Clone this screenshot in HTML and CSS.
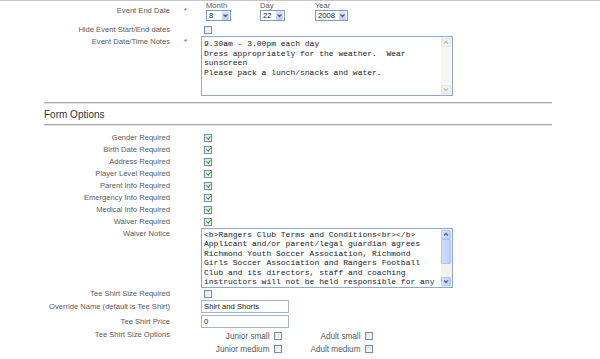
FILE: index.html
```html
<!DOCTYPE html>
<html lang="en">
<head>
    <meta charset="UTF-8">
    <meta name="viewport" content="width=device-width, initial-scale=1.0">
    <title>Event Form Options</title>
    <link rel="stylesheet" href="styles.css">
</head>
<body>

<div class="topline"></div>

<!-- Ngày kết thúc -->
<div class="row row-date">
    <div class="lbl">Event End Date</div>
    <div class="req">*</div>
    <div class="fld date-pick">
        <div class="date-part">
            <div class="sublbl">Month</div>
            <div class="sel sel-month">
                <span class="sel-val">8</span>
                <span class="sel-btn"><svg width="7" height="9" viewBox="0 0 7 9"><polyline points="1.5,3.5 3.5,5.5 5.5,3.5" fill="none" stroke="#4d6185" stroke-width="1.4"/></svg></span>
            </div>
        </div>
        <div class="date-part">
            <div class="sublbl">Day</div>
            <div class="sel sel-day">
                <span class="sel-val">22</span>
                <span class="sel-btn"><svg width="7" height="9" viewBox="0 0 7 9"><polyline points="1.5,3.5 3.5,5.5 5.5,3.5" fill="none" stroke="#4d6185" stroke-width="1.4"/></svg></span>
            </div>
        </div>
        <div class="date-part">
            <div class="sublbl">Year</div>
            <div class="sel sel-year">
                <span class="sel-val">2008</span>
                <span class="sel-btn"><svg width="7" height="9" viewBox="0 0 7 9"><polyline points="1.5,3.5 3.5,5.5 5.5,3.5" fill="none" stroke="#4d6185" stroke-width="1.4"/></svg></span>
            </div>
        </div>
    </div>
</div>

<div class="row row-chk">
    <div class="lbl">Hide Event Start/End dates</div>
    <div class="req"></div>
    <div class="fld"><span class="chk"></span></div>
</div>

<div class="row">
    <div class="lbl">Event Date/Time Notes</div>
    <div class="req">*</div>
    <div class="fld">
        <div class="tarea tarea-notes">
            <div class="tarea-text">9.30am - 3.00pm each day
Dress appropriately for the weather.  Wear
sunscreen
Please pack a lunch/snacks and water.</div>
            <div class="sbar">
                <span class="sbtn"><svg width="8" height="7" viewBox="0 0 8 7"><polyline points="2,4.5 4,2.5 6,4.5" fill="none" stroke="#b8b8b4" stroke-width="1.2"/></svg></span>
                <span class="strack"></span>
                <span class="sbtn"><svg width="8" height="7" viewBox="0 0 8 7"><polyline points="2,2.5 4,4.5 6,2.5" fill="none" stroke="#b8b8b4" stroke-width="1.2"/></svg></span>
            </div>
        </div>
    </div>
</div>

<!-- Tùy chọn form -->
<div class="sect">
    <div class="rule"></div>
    <div class="sect-title">Form Options</div>
    <div class="rule rule-low"></div>
</div>

<div class="chk-list">
    <div class="row row-chk">
        <div class="lbl">Gender Required</div>
        <div class="req"></div>
        <div class="fld"><span class="chk on"></span></div>
    </div>
    <div class="row row-chk">
        <div class="lbl">Birth Date Required</div>
        <div class="req"></div>
        <div class="fld"><span class="chk on"></span></div>
    </div>
    <div class="row row-chk">
        <div class="lbl">Address Required</div>
        <div class="req"></div>
        <div class="fld"><span class="chk on"></span></div>
    </div>
    <div class="row row-chk">
        <div class="lbl">Player Level Required</div>
        <div class="req"></div>
        <div class="fld"><span class="chk on"></span></div>
    </div>
    <div class="row row-chk">
        <div class="lbl">Parent Info Required</div>
        <div class="req"></div>
        <div class="fld"><span class="chk on"></span></div>
    </div>
    <div class="row row-chk">
        <div class="lbl">Emergency Info Required</div>
        <div class="req"></div>
        <div class="fld"><span class="chk on"></span></div>
    </div>
    <div class="row row-chk">
        <div class="lbl">Medical Info Required</div>
        <div class="req"></div>
        <div class="fld"><span class="chk on"></span></div>
    </div>
    <div class="row row-chk">
        <div class="lbl">Waiver Required</div>
        <div class="req"></div>
        <div class="fld"><span class="chk on"></span></div>
    </div>
</div>

<div class="row">
    <div class="lbl">Waiver Notice</div>
    <div class="req"></div>
    <div class="fld">
        <div class="tarea tarea-waiver">
            <div class="tarea-text">&lt;b&gt;Rangers Club Terms and Conditions&lt;br&gt;&lt;/b&gt;
Applicant and/or parent/legal guardian agrees
Richmond Youth Soccer Association, Richmond
Girls Soccer Association and Rangers Football
Club and its directors, staff and coaching
instructors will not be held responsible for any</div>
            <div class="sbar sbar-on">
                <span class="sbtn"><svg width="8" height="7" viewBox="0 0 8 7"><polyline points="2,4.5 4,2.5 6,4.5" fill="none" stroke="#4d6185" stroke-width="1.3"/></svg></span>
                <span class="sthumb"></span>
                <span class="strack"></span>
                <span class="sbtn"><svg width="8" height="7" viewBox="0 0 8 7"><polyline points="2,2.5 4,4.5 6,2.5" fill="none" stroke="#4d6185" stroke-width="1.3"/></svg></span>
            </div>
        </div>
    </div>
</div>

<div class="row row-chk">
    <div class="lbl">Tee Shirt Size Required</div>
    <div class="req"></div>
    <div class="fld"><span class="chk"></span></div>
</div>

<div class="row row-inp">
    <div class="lbl">Override Name (default is Tee Shirt)</div>
    <div class="req"></div>
    <div class="fld"><div class="inp">Shirt and Shorts</div></div>
</div>

<div class="row row-inp row-price">
    <div class="lbl">Tee Shirt Price</div>
    <div class="req"></div>
    <div class="fld"><div class="inp">0</div></div>
</div>

<div class="row">
    <div class="lbl">Tee Shirt Size Options</div>
    <div class="req"></div>
    <div class="fld">
        <div class="size-grid">
            <div class="size-cell">Junior small <span class="chk"></span></div>
            <div class="size-cell">Adult small <span class="chk"></span></div>
            <div class="size-cell">Junior medium <span class="chk"></span></div>
            <div class="size-cell">Adult medium <span class="chk"></span></div>
        </div>
    </div>
</div>

</body>
</html>
```

FILE: styles.css
```css
/* Style chung */
body {
    margin: 0;
    background-color: #fff;
    font-family: "Liberation Sans", Arial, sans-serif;
    font-size: 7.6px;
    color: #5a5a5a;
}

.topline {
    height: 1px;
    background-color: #c8c8c8;
}

/* Hàng của form */
.row {
    display: flex;
}

.lbl {
    flex: none;
    width: 170px;
    text-align: right;
    line-height: 12px;
    white-space: nowrap;
}

.req {
    flex: none;
    width: 17px;
    padding-left: 14px;
    color: #e02020;
    font-size: 8px;
    line-height: 12px;
}

.fld {
    flex: none;
}

.row-chk {
    height: 12px;
    align-items: center;
}

.row-chk .fld {
    display: flex;
    align-items: center;
}

/* Checkbox kiểu XP */
.chk {
    display: inline-block;
    box-sizing: border-box;
    width: 8px;
    height: 8px;
    border: 1px solid #6f8db4;
    background: linear-gradient(135deg, #e4e4dc, #fbfbf8);
    position: relative;
}

.row-chk .chk {
    margin-left: 3px;
}

.chk.on::after {
    content: "";
    position: absolute;
    left: 1.5px;
    top: 0.5px;
    width: 1.6px;
    height: 3.2px;
    border-right: 1.4px solid #22a022;
    border-bottom: 1.4px solid #22a022;
    transform: rotate(40deg);
}

/* Chọn ngày */
.row-date {
    height: 23px;
}

.row-date .lbl,
.row-date .req {
    padding-top: 4px;
}

.date-pick {
    display: grid;
    grid-template-columns: 54px 55px auto;
    margin-left: 5px;
}

.sublbl {
    line-height: 9px;
}

.sel {
    box-sizing: border-box;
    height: 11px;
    border: 1px solid #7f9db9;
    background-color: #fff;
    display: flex;
    align-items: center;
    justify-content: space-between;
    padding: 0 1px 0 2px;
    color: #222;
    font-size: 7.6px;
}

.sel-month { width: 25px; }
.sel-day { width: 25px; }
.sel-year { width: 33px; }

.sel-btn {
    width: 7px;
    height: 9px;
    background: linear-gradient(#dbe6fd, #bccff9);
    border-radius: 1px;
    display: flex;
}

/* Textarea */
.tarea {
    box-sizing: border-box;
    width: 252px;
    border: 1px solid #8faac8;
    display: flex;
    background-color: #fff;
}

.tarea-notes { height: 60px; }
.tarea-waiver { height: 60px; }

.tarea-text {
    flex: 1;
    padding: 2px 2px 0 2px;
    font-family: "Liberation Mono", "Courier New", monospace;
    font-size: 8px;
    line-height: 9.6px;
    color: #1a1a1a;
    white-space: pre;
    overflow: hidden;
}

.tarea-waiver .tarea-text {
    padding-top: 1px;
    line-height: 9.5px;
}

.sbar {
    flex: none;
    width: 10px;
    display: flex;
    flex-direction: column;
    padding: 1px 1px 1px 0;
    background-color: #f6f6f3;
}

.sbtn {
    box-sizing: border-box;
    height: 9px;
    display: flex;
    align-items: center;
    justify-content: center;
    background-color: #f1f1ee;
    border: 1px solid #e4e4e0;
    border-radius: 1px;
}

.strack {
    flex: 1;
}

.sbar-on {
    background-color: #f3f3ee;
}

.sbar-on .sbtn {
    background: linear-gradient(90deg, #d6e2fd, #bfd0fa);
    border-color: #b6c8f2;
}

.sthumb {
    box-sizing: border-box;
    height: 25px;
    background: linear-gradient(90deg, #d2defd, #bccdf8);
    border: 1px solid #b0c3ee;
    border-radius: 1px;
}

/* Tiêu đề phần */
.sect {
    margin: 6px 0 0 44px;
    width: 508px;
}

.rule {
    height: 1px;
    background-color: #a6a6a6;
    border-bottom: 1px solid #e2e2e2;
}

.sect-title {
    margin-top: 4px;
    font-size: 10px;
    line-height: 14px;
    color: #333;
}

.rule-low {
    margin-top: 2px;
}

.chk-list {
    margin-top: 5.5px;
}

/* Ô nhập liệu */
.row-inp {
    height: 14px;
    align-items: center;
}

.row-price {
    margin-top: 1px;
}

.inp {
    box-sizing: border-box;
    width: 88px;
    height: 13px;
    border: 1px solid #a2b6d0;
    padding-left: 2px;
    font-size: 7.7px;
    line-height: 11px;
    color: #222;
}

/* Kích cỡ áo */
.size-grid {
    display: grid;
    grid-template-columns: 81px 91px;
    grid-auto-rows: 13.3px;
    padding-top: 1px;
}

.size-cell {
    display: flex;
    justify-content: flex-end;
    align-items: center;
    gap: 4.5px;
    font-size: 8.2px;
    white-space: nowrap;
}
```
